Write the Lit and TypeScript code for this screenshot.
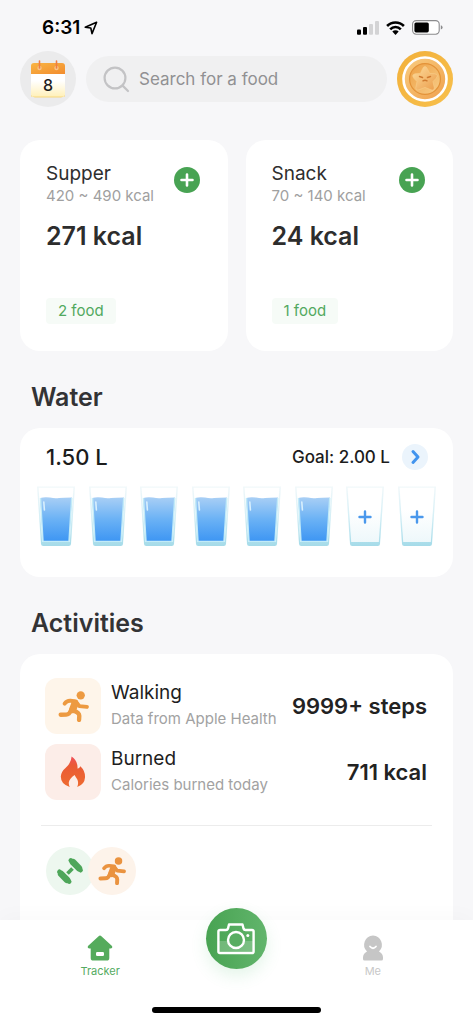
import { LitElement, html, css, svg } from "lit";
import { customElement, property, state } from "lit/decorators.js";

const runner = svg`
  <g fill="none" stroke="currentColor" stroke-linecap="round" stroke-linejoin="round">
    <path d="M6.400 12.200Q8.600 9.200 12 9.400L17.400 10" stroke-width="3.800"/>
    <path d="M17.400 10.600 20.600 14.600 28 15.400" stroke-width="3.800"/>
    <path d="M16.400 12.200 14.200 18" stroke-width="7"/>
    <path d="M12.800 18.400Q11 22.800 8 22.800L2.600 23" stroke-width="4.200"/>
    <path d="M14.800 19Q20.600 20.800 20.600 24L20.400 28" stroke-width="4.200"/>
  </g>
  <circle cx="22" cy="4.200" r="4" fill="currentColor"/>`;

@customElement("status-bar")
class StatusBar extends LitElement {
  static styles = css`
    :host { display: flex; align-items: center; justify-content: space-between; height: 51px; padding: 4px 30px 0 42px; box-sizing: border-box; color: #000; }
    .time { display: flex; align-items: center; gap: 4px; font-size: 19px; font-weight: 600; line-height: 24px; }
    .signals { display: flex; align-items: center; gap: 7px; }
    svg { display: block; }
  `;
  render() {
    return html`
      <div class="time">
        <span>6:31</span>
        <svg width="14" height="14" viewBox="0 0 14 14" fill="none" stroke="#000" stroke-width="1.6" stroke-linejoin="round"><path d="M12.6 1.2 1.2 6.2 6.8 7 8 12.6Z"/></svg>
      </div>
      <div class="signals">
        <svg width="22" height="14" viewBox="0 0 22 14">
          <rect x="0" y="8.6" width="4" height="5.2" rx="1"/>
          <rect x="6" y="6" width="4" height="7.8" rx="1"/>
          <rect x="12" y="3" width="4" height="10.8" rx="1" fill="#d3d3d5"/>
          <rect x="18" y="0" width="4" height="13.8" rx="1" fill="#d3d3d5"/>
        </svg>
        <svg width="19" height="14" viewBox="0 0 19 14">
          <g fill="none" stroke="#000" stroke-width="2.6"><path d="M1.1 5A11.8 11.8 0 0 1 17.9 5"/><path d="M4.2 8.3A7.4 7.4 0 0 1 14.8 8.3"/></g>
          <path d="M6.3 10.6A4.6 4.6 0 0 1 12.7 10.6L9.5 14Z"/>
        </svg>
        <svg width="31" height="15" viewBox="0 0 31 15">
          <rect x=".6" y=".6" width="26.6" height="13.6" rx="3.6" fill="#fff" stroke="#8b8b8d" stroke-width="1.1"/>
          <rect x="2.4" y="2.4" width="14.4" height="10" rx="1.6"/>
          <path d="M28.8 5.2Q30.6 5.8 30.6 7.4T28.8 9.6Z" fill="#8b8b8d"/>
        </svg>
      </div>`;
  }
}

@customElement("top-bar")
class TopBar extends LitElement {
  static styles = css`
    :host { display: flex; align-items: center; gap: 10px; padding: 0 20px; }
    button { flex: none; width: 56px; height: 56px; padding: 0; border: 0; border-radius: 50%; background: #ebebec; display: grid; place-items: center; }
    .search { flex: 1; min-width: 0; display: flex; align-items: center; gap: 9px; height: 46px; padding: 0 17px; border-radius: 23px; background: #f0f0f1; }
    .search svg { flex: none; }
    input { flex: 1; min-width: 0; border: 0; padding: 0; outline: 0; background: none; font: 400 17px/24px Inter, sans-serif; color: #333; }
    input::placeholder { color: #919193; opacity: 1; }
    svg { display: block; }
    .day { font: 500 16px Inter, sans-serif; }
  `;
  render() {
    return html`
      <button aria-label="Choose day">
        <svg width="36" height="38" viewBox="0 0 36 38">
          <defs>
            <linearGradient id="page" x2="0" y2="1"><stop offset=".4" stop-color="#fff"/><stop offset="1" stop-color="#fff0b8"/></linearGradient>
            <linearGradient id="band" x2="1" y2="1"><stop stop-color="#f9b544"/><stop offset="1" stop-color="#f28c2e"/></linearGradient>
          </defs>
          <path d="M1 10H35V34Q35 37 32 37H4Q1 37 1 34Z" fill="url(#page)"/>
          <path d="M1 35Q2 37.400 5 37.400H31Q34 37.400 35 35L35 36.500H1Z" fill="#f8d77c"/>
          <path d="M1 14V6Q1 3 4 3H32Q35 3 35 6V14Z" fill="url(#band)"/>
          <g fill="#f8c488"><circle cx="9.500" cy="8" r="2.200"/><circle cx="26.500" cy="8" r="2.200"/></g>
          <g stroke="#ef7d45" stroke-width="1.600" stroke-linecap="round"><path d="M9.500 1V8"/><path d="M26.500 1V8"/></g>
          <text class="day" x="18" y="31" text-anchor="middle" fill="#1d1d1d">8</text>
        </svg>
      </button>
      <label class="search">
        <svg width="27" height="27" viewBox="0 0 27 27" fill="none" stroke="#c3c3c5" stroke-width="2.200" stroke-linecap="round"><circle cx="12" cy="12" r="10.400"/><path d="M19.600 19.600 25 25"/></svg>
        <input type="search" placeholder="Search for a food" aria-label="Search for a food" />
      </label>
      <button aria-label="Rewards">
        <svg width="56" height="56" viewBox="0 0 56 56">
          <defs>
            <linearGradient id="rim" x2="1" y2="1"><stop stop-color="#f2b03a"/><stop offset="1" stop-color="#f8c04c"/></linearGradient>
            <linearGradient id="coin" x2="1" y2="1"><stop stop-color="#f9cd80"/><stop offset="1" stop-color="#efa04c"/></linearGradient>
            <linearGradient id="face" x2="1" y2="1"><stop stop-color="#eda044"/><stop offset="1" stop-color="#f8cd88"/></linearGradient>
            <linearGradient id="star" x2="1" y2="1"><stop stop-color="#fddc9c"/><stop offset="1" stop-color="#eb9c4a"/></linearGradient>
          </defs>
          <circle cx="28" cy="28" r="28" fill="url(#rim)"/>
          <circle cx="28" cy="28" r="21.500" fill="url(#coin)" stroke="#fff" stroke-width="2.600"/>
          <circle cx="28" cy="28" r="15.400" fill="url(#face)" stroke="#e39238" stroke-width="1.200"/>
          <path d="M28 15.500Q29.400 15.500 30.400 17.800L32.600 22.400 38 22.800Q42 24 39 27.400L36 30.600 37.200 36.500Q37.400 40 34 38.800L28 36.400 22 38.800Q18.600 40 18.800 36.500L20 30.600 17 27.400Q14 24 18 22.800L23.400 22.400 25.600 17.800Q26.600 15.500 28 15.500Z" fill="url(#star)" stroke="#f8cf8c" stroke-width=".6"/>
          <g stroke="#d07b30" stroke-width="1.500" stroke-linecap="round" fill="none"><path d="M22.500 25.500 25.500 26.500"/><path d="M33.500 25.500 30.500 26.500"/><path d="M26 29.800Q28 28.600 30 29.800"/></g>
        </svg>
      </button>`;
  }
}

@customElement("meal-card")
class MealCard extends LitElement {
  @property() name = "";
  @property() range = "";
  @property() total = "";
  @property() count = "";
  static styles = css`
    :host { display: flex; flex-direction: column; align-items: flex-start; height: 211px; box-sizing: border-box; padding: 22px 28px 27px 26px; border-radius: 20px; background: #fff; }
    .head { display: flex; align-self: stretch; justify-content: space-between; align-items: flex-start; }
    h3 { margin: 0; font-size: 19px; font-weight: 400; line-height: 24px; color: #2e2e2e; }
    .range { margin: 0; font-size: 15px; line-height: 20px; color: #a0a0a0; white-space: nowrap; }
    .total { margin: 14px 0 0; font-size: 25px; font-weight: 600; line-height: 32px; color: #2d2d2d; }
    .tag { margin-top: auto; padding: 0 12px; border-radius: 4px; background: #f6fbf7; font-size: 15px; line-height: 26px; color: #52a960; }
    button { flex: none; width: 26px; height: 26px; margin-top: 5px; border: 0; padding: 0; border-radius: 50%; background: #48a353; }
    svg { display: block; }
  `;
  render() {
    return html`
      <div class="head">
        <div><h3>${this.name}</h3><p class="range">${this.range}</p></div>
        <button aria-label="Add to ${this.name}">
          <svg width="26" height="26" viewBox="0 0 26 26" stroke="#fff" stroke-width="2.600" stroke-linecap="round"><path d="M13 7.500V18.500M7.500 13H18.500"/></svg>
        </button>
      </div>
      <p class="total">${this.total}</p>
      <span class="tag">${this.count}</span>`;
  }
}

@customElement("water-card")
class WaterCard extends LitElement {
  @state() filled = 6;
  static styles = css`
    :host { display: block; padding: 16px 17px 30px; border-radius: 20px; background: #fff; }
    .head { display: flex; align-items: center; gap: 12px; padding: 0 8px 0 9px; height: 26px; color: #1c1c1c; }
    .amount { flex: 1; font-size: 22px; font-weight: 500; line-height: 26px; }
    .goal { font-size: 17px; font-weight: 500; line-height: 26px; }
    button { border: 0; padding: 0; background: none; flex: none; }
    .more { width: 26px; height: 26px; border-radius: 50%; background: #ebf4fc; }
    .glasses { display: flex; justify-content: space-between; margin-top: 16px; }
    svg { display: block; }
  `;
  glass(i: number) {
    const full = i < this.filled;
    return html`
      <button aria-label="Glass ${i + 1}" @click=${() => (this.filled = i + 1)}>
        <svg width="38" height="61" viewBox="0 0 38 61">
          <defs>
            <linearGradient id="wall" x2="0" y2="1"><stop stop-color="#f1f8fa"/><stop offset=".5" stop-color="#d5eff6"/><stop offset="1" stop-color="#a5dbe9"/></linearGradient>
            <linearGradient id="water" x2="0" y2="1"><stop stop-color="#a9cff5"/><stop offset=".5" stop-color="#6bb2f5"/><stop offset="1" stop-color="#3e96f3"/></linearGradient>
            <linearGradient id="clear" x2="0" y2="1"><stop offset=".4" stop-color="#fff"/><stop offset="1" stop-color="#eef8fb"/></linearGradient>
          </defs>
          <path d="M0 .5H38L34 58Q33.800 60 31.800 60H6.200Q4.200 60 4 58Z" fill="url(#wall)"/>
          <path d="M1.600 1.800H36.400L32.800 56H5.200Z" fill="url(#clear)"/>
          ${full
            ? svg`<path d="M3.200 12Q8 10.600 13 11.600T22 12 35 11.400L32 55H6Z" fill="url(#water)"/>
              <path d="M3.500 12 6 55.400H32L34.700 12" fill="none" stroke="#c2ebf8" stroke-width="1.400"/>
              <path d="M6.800 16 7.400 24" stroke="#d8effd" stroke-width="1.600" stroke-linecap="round"/>`
            : svg`<path d="M19 25.500V36.500M13.500 31H24.500" stroke="#4a98ec" stroke-width="2.400" stroke-linecap="round"/>`}
        </svg>
      </button>`;
  }
  render() {
    return html`
      <div class="head">
        <span class="amount">${(this.filled * 0.25).toFixed(2)} L</span>
        <span class="goal">Goal: 2.00 L</span>
        <button class="more" aria-label="Water details">
          <svg width="26" height="26" viewBox="0 0 26 26" fill="none" stroke="#4294ee" stroke-width="3" stroke-linecap="round" stroke-linejoin="round"><path d="M11 7.500 16 13 11 18.500"/></svg>
        </button>
      </div>
      <div class="glasses">${[0, 1, 2, 3, 4, 5, 6, 7].map((i) => this.glass(i))}</div>`;
  }
}

@customElement("activity-card")
class ActivityCard extends LitElement {
  static styles = css`
    :host { display: block; padding: 24px 21px 60px; border-radius: 20px; background: #fff; }
    .rows { display: grid; gap: 10px; padding: 0 5px 25px 4px; }
    .row { display: flex; align-items: center; gap: 10px; }
    .tile { flex: none; width: 56px; height: 56px; border-radius: 12px; display: grid; place-items: center; }
    .walk { background: #fef5ea; color: #ed9a41; }
    .burn { background: #fcede8; }
    .info { flex: 1; min-width: 0; }
    h3 { margin: 0; font-size: 19px; font-weight: 400; line-height: 26px; color: #1e1e1e; }
    p { margin: 0; font-size: 15px; line-height: 26px; color: #a2a2a2; white-space: nowrap; }
    .value { font-size: 22px; font-weight: 600; line-height: 28px; color: #222; white-space: nowrap; }
    .kinds { display: flex; padding: 21px 5px 0; border-top: 1px solid #ececec; }
    .kind { width: 48px; height: 48px; border-radius: 50%; display: grid; place-items: center; }
    .gym { background: #edf7ef; color: #4ea65a; }
    .run { margin-left: -6px; background: #fdf3ea; color: #ea9340; }
    svg { display: block; }
  `;
  render() {
    return html`
      <div class="rows">
        <div class="row">
          <div class="tile walk"><svg width="31" height="31" viewBox="0 0 30 30">${runner}</svg></div>
          <div class="info"><h3>Walking</h3><p>Data from Apple Health</p></div>
          <div class="value">9999+ steps</div>
        </div>
        <div class="row">
          <div class="tile burn">
            <svg width="26" height="32" viewBox="0 0 26 32">
              <defs><linearGradient id="fire" x2="0" y2="1"><stop stop-color="#f0505a"/><stop offset=".3" stop-color="#ea5a35"/><stop offset="1" stop-color="#ee6b30"/></linearGradient></defs>
              <path d="M11.600.6Q17.800 4.500 17.600 12.800 19.800 12 20.400 10.200 25.400 15 25 21.500 24.600 28.500 17.200 31 19 26.800 17.200 23.200 15.600 21 14.600 19 9.400 22.600 8.800 26.500 8.600 29 9.800 31 .8 28.400.8 20.600 1 15.600 6 11.400 11.200 7 11.600.6Z" fill="url(#fire)"/>
            </svg>
          </div>
          <div class="info"><h3>Burned</h3><p>Calories burned today</p></div>
          <div class="value">711 kcal</div>
        </div>
      </div>
      <div class="kinds">
        <div class="kind gym">
          <svg width="28" height="28" viewBox="0 0 28 28" fill="none" stroke="currentColor" stroke-linecap="round">
            <path d="M11.500 16.500 16.500 11.500" stroke-width="3.800" stroke-linecap="butt"/>
            <path d="M17 5.200 22.800 11" stroke-width="6.600"/><path d="M14.800 3.400 24.600 13.200" stroke-width="4.600"/>
            <path d="M5.200 17 11 22.800" stroke-width="6.600"/><path d="M3.400 14.800 13.200 24.600" stroke-width="4.600"/>
          </svg>
        </div>
        <div class="kind run"><svg width="28" height="28" viewBox="0 0 30 30">${runner}</svg></div>
      </div>`;
  }
}

@customElement("tab-bar")
class TabBar extends LitElement {
  static styles = css`
    :host { display: block; position: relative; background: #fff; box-shadow: 0 -4px 20px rgba(0, 0, 0, 0.025); }
    nav { display: grid; grid-template-columns: repeat(3, 1fr); height: 87px; padding: 0 32px; }
    a { display: flex; flex-direction: column; align-items: center; gap: 2px; padding-top: 15px; font-size: 11px; line-height: 16px; text-decoration: none; }
    .active { color: #55ab62; }
    .idle { color: #c8c8c8; }
    .camera { justify-self: center; width: 61px; height: 61px; margin-top: -12px; padding: 0; border: 0; border-radius: 50%; display: grid; place-items: center; background: linear-gradient(90deg, #48a352, #62b56c); box-shadow: 0 7px 16px rgba(90, 190, 120, 0.16); }
    .home { width: 169px; height: 6px; margin: 0 auto 11px; border-radius: 3px; background: #000; }
    svg { display: block; }
  `;
  render() {
    return html`
      <nav>
        <a class="active" href="#tracker">
          <svg width="26" height="26" viewBox="0 0 26 26"><path d="M11.600 1.200Q13 0 14.400 1.200L25 11Q26 13.400 23.400 13.400H22.300V23Q22.300 25.600 19.700 25.600H6.300Q3.700 25.600 3.700 23V13.400H2.600Q0 13.400 1 11Z" fill="#55ab5c"/><rect x="9" y="17" width="8" height="4" rx="1.200" fill="#fff"/></svg>
          <span>Tracker</span>
        </a>
        <button class="camera" aria-label="Scan food">
          <svg width="38" height="32" viewBox="0 0 38 32" fill="none" stroke="#fff" stroke-width="2.400" stroke-linejoin="round">
            <path d="M2 18H36V28.500H2Z" fill="#fff" fill-opacity=".2" stroke="none"/>
            <path d="M3.200 7H9Q10.500 7 11 5.500L12 1.500H25.500L26.500 5.500Q27 7 28.500 7H35Q36.600 7 36.600 8.600V28.400Q36.600 30 35 30H3Q1.400 30 1.400 28.400V8.600Q1.400 7 3.200 7Z"/>
            <circle cx="19" cy="17" r="8" fill="#58ad61"/><circle cx="30.800" cy="12.500" r="1.500" fill="#fff" stroke="none"/>
          </svg>
        </button>
        <a class="idle" href="#me">
          <svg width="22" height="26" viewBox="0 0 22 26"><path d="M11 .5A9.300 9.300 0 0 1 17 16.500Q21 18.500 21 22.500V24Q21 25.600 19.400 25.600H2.600Q1 25.600 1 24V22.500Q1 18.500 5 16.500A9.300 9.300 0 0 1 11 .5Z" fill="#c6c6c6"/><path d="M8 11.500Q11 15 14 11.500" fill="none" stroke="#fff" stroke-width="1.800" stroke-linecap="round"/></svg>
          <span>Me</span>
        </a>
      </nav>
      <div class="home"></div>`;
  }
}

@customElement("app-root")
class AppRoot extends LitElement {
  static styles = css`
    :host { display: flex; flex-direction: column; height: 100vh; background: #f7f7f9; font-family: Inter, "Noto Sans", sans-serif; }
    main { flex: 1; min-height: 0; overflow: hidden; padding: 33px 20px 0; }
    .meals { display: grid; grid-template-columns: 1fr 1fr; gap: 18px; }
    h2 { margin: 0; padding: 29px 11px 14px; font-size: 25px; font-weight: 600; line-height: 34px; color: #333335; }
  `;
  render() {
    return html`
      <status-bar></status-bar>
      <top-bar></top-bar>
      <main>
        <div class="meals">
          <meal-card name="Supper" range="420 ~ 490 kcal" total="271 kcal" count="2 food"></meal-card>
          <meal-card name="Snack" range="70 ~ 140 kcal" total="24 kcal" count="1 food"></meal-card>
        </div>
        <h2>Water</h2>
        <water-card></water-card>
        <h2>Activities</h2>
        <activity-card></activity-card>
      </main>
      <tab-bar></tab-bar>`;
  }
}
